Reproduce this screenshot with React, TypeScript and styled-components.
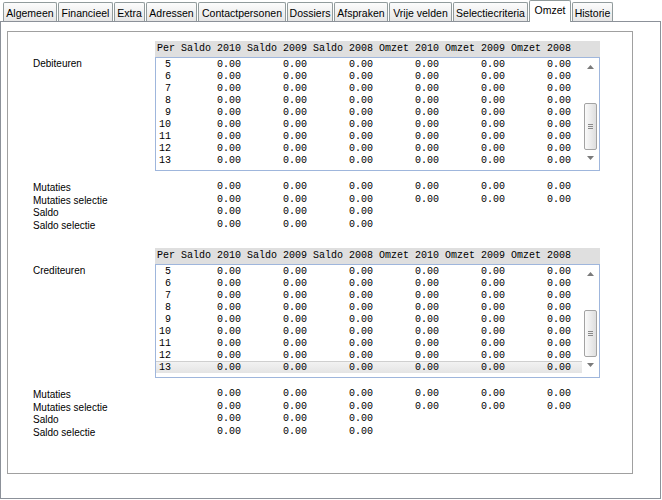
import styled, { createGlobalStyle } from "styled-components";

const GlobalStyle = createGlobalStyle`
  html, body {
    margin: 0;
    padding: 0;
    background: #ffffff;
  }
  body {
    font-family: "Liberation Sans", Arial, sans-serif;
    color: #000;
  }
`;

const tabs = [
    { label: "Algemeen", width: 54 },
    { label: "Financieel", width: 55 },
    { label: "Extra", width: 31 },
    { label: "Adressen", width: 51 },
    { label: "Contactpersonen", width: 88 },
    { label: "Dossiers", width: 46 },
    { label: "Afspraken", width: 54 },
    { label: "Vrije velden", width: 63 },
    { label: "Selectiecriteria", width: 75 },
    { label: "Omzet", width: 42, active: true },
    { label: "Historie", width: 41 },
];

const columns = ["Saldo 2010", "Saldo 2009", "Saldo 2008", "Omzet 2010", "Omzet 2009", "Omzet 2008"];
const periods = [5, 6, 7, 8, 9, 10, 11, 12, 13];
const summary = [
    { label: "Mutaties", count: 6 },
    { label: "Mutaties selectie", count: 6 },
    { label: "Saldo", count: 3 },
    { label: "Saldo selectie", count: 3 },
];

function OmzetSection({ title, selected }: { title: string; selected?: number }) {
    return (
        <Section>
            <TableBlock>
                <SideLabel>{title}</SideLabel>
                <div>
                    <HeaderRow>
                        <PerHead>Per</PerHead>
                        {columns.map(c => <HeadCell key={c}>{c}</HeadCell>)}
                    </HeaderRow>
                    <ListBox>
                        <Rows>
                            {periods.map(p => (
                                <Row key={title + p} $selected={p === selected}>
                                    <PerCell>{p}</PerCell>
                                    {columns.map(c => <ValueCell key={c}>0.00</ValueCell>)}
                                </Row>
                            ))}
                        </Rows>
                        <ScrollBar>
                            <ArrowBox $h={20}>
                                <svg width="7" height="4" viewBox="0 0 7 4"><polygon points="0,4 7,4 3.5,0" fill="#7a7a7a" /></svg>
                            </ArrowBox>
                            <Track>
                                <Thumb>
                                    <Grip /><Grip /><Grip />
                                </Thumb>
                            </Track>
                            <ArrowBox $h={17}>
                                <svg width="7" height="4" viewBox="0 0 7 4"><polygon points="0,0 7,0 3.5,4" fill="#7a7a7a" /></svg>
                            </ArrowBox>
                        </ScrollBar>
                    </ListBox>
                </div>
            </TableBlock>
            <Summary>
                {summary.map(s => (
                    <SummaryRow key={title + s.label}>
                        <SumLabel>{s.label}</SumLabel>
                        <PerSpacer />
                        {Array.from({ length: s.count }).map((_, i) => <ValueCell key={i}>0.00</ValueCell>)}
                    </SummaryRow>
                ))}
            </Summary>
        </Section>
    );
}

export default function App() {
    return (
        <>
            <GlobalStyle />
            <Window>
                <TabStrip>
                    {tabs.map(t => (
                        <Tab key={t.label} $w={t.width} $active={t.active}>{t.label}</Tab>
                    ))}
                </TabStrip>
                <Page>
                    <Panel>
                        <OmzetSection title="Debiteuren" />
                        <OmzetSection title="Crediteuren" selected={13} />
                    </Panel>
                </Page>
            </Window>
        </>
    );
}

const Window = styled.div`
    width: 662px;
    height: 500px;
    background: #fff;
    overflow: hidden;
`;

const TabStrip = styled.div`
    display: flex;
    align-items: flex-end;
    height: 21px;
    padding-left: 3px;
`;

const Tab = styled.div<{ $w: number; $active?: boolean }>`
    box-sizing: border-box;
    width: ${p => p.$w}px;
    height: ${p => (p.$active ? 22 : 19)}px;
    margin-right: 1px;
    margin-bottom: ${p => (p.$active ? -1 : 0)}px;
    position: relative;
    z-index: ${p => (p.$active ? 1 : 0)};
    border: 1px solid #919b9c;
    border-bottom: none;
    border-radius: 2px 2px 0 0;
    background: ${p => (p.$active ? "#ffffff" : "linear-gradient(#fcfcfc, #e6e6e6)")};
    font-size: 10.5px;
    line-height: 14px;
    padding-top: ${p => (p.$active ? 2 : 3)}px;
    text-align: center;
    white-space: nowrap;
    color: #000;
`;

const Page = styled.div`
    box-sizing: border-box;
    width: 661px;
    height: 478px;
    border: 1px solid #8c9199;
    padding: 9px 0 0 6px;
    background: #fff;
`;

const Panel = styled.div`
    box-sizing: border-box;
    width: 626px;
    height: 443px;
    border: 1px solid #a0a0a0;
    padding: 9px 0 0 25px;
`;

const Section = styled.div`
    margin-bottom: 17px;
`;

const TableBlock = styled.div`
    display: grid;
    grid-template-columns: 122px 445px;
`;

const SideLabel = styled.div`
    padding-top: 17px;
    font-size: 10px;
    line-height: 12px;
`;

const mono = `
    font-family: "Liberation Mono", "DejaVu Sans Mono", monospace;
    font-size: 10px;
`;

const HeaderRow = styled.div`
    display: flex;
    height: 16px;
    line-height: 16px;
    padding-left: 2px;
    background: #dfdfdf;
    ${mono}
    white-space: pre;
`;

const PerHead = styled.span`
    width: 24px;
`;

const HeadCell = styled.span`
    width: 66px;
`;

const ListBox = styled.div`
    box-sizing: border-box;
    display: flex;
    height: 114px;
    border: 1px solid #9fb6dc;
    padding-bottom: 4px;
    background: #fff;
`;

const Rows = styled.div`
    flex: 1;
`;

const Row = styled.div<{ $selected?: boolean }>`
    box-sizing: border-box;
    display: flex;
    height: 12px;
    line-height: 11px;
    padding-left: 1px;
    ${mono}
    background: ${p => (p.$selected ? "linear-gradient(#f2f2f2, #e4e4e4)" : "transparent")};
    border-top: 1px solid ${p => (p.$selected ? "#cfcfcf" : "transparent")};
`;

const PerCell = styled.span`
    box-sizing: border-box;
    width: 24px;
    padding-right: 10px;
    text-align: right;
`;

const ValueCell = styled.span`
    box-sizing: border-box;
    width: 66px;
    padding-right: 6px;
    text-align: right;
    ${mono}
`;

const ScrollBar = styled.div`
    width: 17px;
    display: flex;
    flex-direction: column;
`;

const ArrowBox = styled.div<{ $h: number }>`
    height: ${p => p.$h}px;
    display: flex;
    align-items: center;
    justify-content: center;
`;

const Track = styled.div`
    flex: 1;
    display: flex;
    flex-direction: column;
    align-items: center;
`;

const Thumb = styled.div`
    box-sizing: border-box;
    width: 13px;
    height: 47px;
    margin-top: 27px;
    border: 1px solid #a3a3a3;
    border-radius: 2px;
    background: linear-gradient(to right, #fafafa, #dedede);
    display: flex;
    flex-direction: column;
    align-items: center;
    justify-content: center;
    gap: 1px;
`;

const Grip = styled.div`
    width: 5px;
    height: 1px;
    background: #8a8a8a;
`;

const Summary = styled.div`
    margin-top: 10px;
`;

const SummaryRow = styled.div`
    display: flex;
    align-items: center;
    height: 12.5px;
    line-height: 12px;
`;

const SumLabel = styled.span`
    width: 124px;
    font-size: 10px;
    padding-top: 2px;
`;

const PerSpacer = styled.span`
    width: 24px;
`;
